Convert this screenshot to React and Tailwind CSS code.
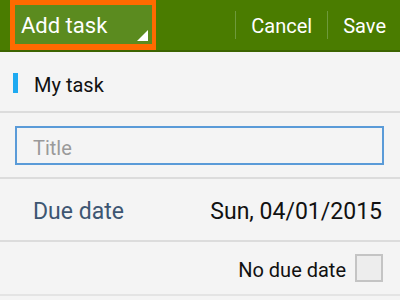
export default function App() {
    return (
        <div className="w-[400px] h-[300px] overflow-hidden bg-[#f4f4f4] font-['Roboto',sans-serif]">
            {/* Action bar */}
            <div className="flex items-stretch h-[52px] bg-[#4a7c00] border-b-2 border-[#3c6400]">
                <div className="ml-[10px] w-[146px] border-[5px] border-r-4 border-b-[6px] border-[#ff6a00] bg-[#5b8b1f] relative flex items-center">
                    <span className="pl-[6px] pt-[3px] text-[22px] text-white leading-none">Add task</span>
                    <div className="absolute right-[4px] bottom-[3px] w-0 h-0 border-l-[11px] border-l-transparent border-b-[11px] border-b-white" />
                </div>
                <div className="ml-auto flex items-center pr-[14px]">
                    <div className="w-px h-[28px] bg-[#6e9a3c]" />
                    <span className="px-[15px] pt-[2px] text-[20px] text-white leading-none">Cancel</span>
                    <div className="w-px h-[28px] bg-[#6e9a3c]" />
                    <span className="pl-[15px] pt-[2px] text-[20px] text-white leading-none">Save</span>
                </div>
            </div>

            {/* List name */}
            <div className="flex items-center h-[61px] border-b-2 border-[#dcdcdc]">
                <div className="ml-[13px] w-[5px] h-[20px] mt-[2px] bg-[#1eaaf1]" />
                <span className="ml-[16px] pt-[6px] text-[20px] text-[#111]">My task</span>
            </div>

            {/* Title input */}
            <div className="h-[66px] px-[15px] pt-[13px] border-b-2 border-[#dcdcdc]">
                <div className="h-[39px] w-[369px] border-2 border-[#5a9bd8] flex items-center pl-[16px]">
                    <span className="pt-[5px] text-[20px] text-[#9a9a9a]">Title</span>
                </div>
            </div>

            {/* Due date */}
            <div className="flex items-center justify-between h-[63px] pt-[5px] pl-[33px] pr-[18px] border-b-2 border-[#dcdcdc]">
                <span className="text-[23px] text-[#3d5672]">Due date</span>
                <span className="text-[23px] text-[#111]">Sun, 04/01/2015</span>
            </div>

            {/* No due date */}
            <div className="flex items-center justify-end h-[54px] pr-[17px] border-b-2 border-[#e4e4e4]">
                <span className="pt-[3px] text-[20px] text-[#111]">No due date</span>
                <div className="ml-[9px] w-[28px] h-[28px] border-2 border-[#c4c4c4] bg-[#ededed]" />
            </div>
        </div>
    );
}
